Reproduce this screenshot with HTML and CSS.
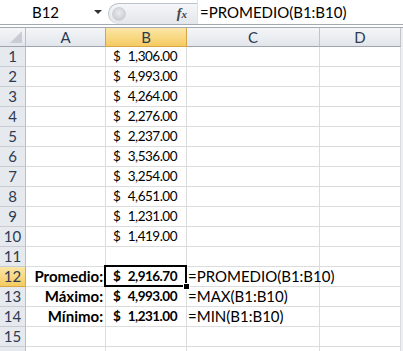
FILE: index.html
```html
<!DOCTYPE html>
<html lang="es">
<head>
  <meta charset="UTF-8">
  <title>Promedio, máximo y mínimo</title>
  <link rel="stylesheet" href="styles.css">
</head>
<body>
  <!-- Formula bar -->
  <div class="toolbar">
    <div class="namebox">
      <span class="name">B12</span>
      <span class="arrow"></span>
    </div>
    <div class="fxbtn">
      <span class="dimple"></span>
      <span class="fx">f<span class="fx-x">x</span></span>
    </div>
    <div class="formula">=PROMEDIO(B1:B10)</div>
  </div>

  <!-- Sheet -->
  <div class="sheet">
    <div class="corner">
      <svg width="12" height="12" viewBox="0 0 12 12"><polygon points="12,0 12,12 0,12" fill="#c9cdd3"/></svg>
    </div>
    <div class="ch">A</div>
    <div class="ch sel">B</div>
    <div class="ch">C</div>
    <div class="ch">D</div>
    <div class="fill"></div>

    <div class="rh">1</div><div class="c"></div><div class="c acc"><span>$</span><span>1,306.00</span></div><div class="c"></div><div class="c"></div><div class="fill"></div>
    <div class="rh">2</div><div class="c"></div><div class="c acc"><span>$</span><span>4,993.00</span></div><div class="c"></div><div class="c"></div><div class="fill"></div>
    <div class="rh">3</div><div class="c"></div><div class="c acc"><span>$</span><span>4,264.00</span></div><div class="c"></div><div class="c"></div><div class="fill"></div>
    <div class="rh">4</div><div class="c"></div><div class="c acc"><span>$</span><span>2,276.00</span></div><div class="c"></div><div class="c"></div><div class="fill"></div>
    <div class="rh">5</div><div class="c"></div><div class="c acc"><span>$</span><span>2,237.00</span></div><div class="c"></div><div class="c"></div><div class="fill"></div>
    <div class="rh">6</div><div class="c"></div><div class="c acc"><span>$</span><span>3,536.00</span></div><div class="c"></div><div class="c"></div><div class="fill"></div>
    <div class="rh">7</div><div class="c"></div><div class="c acc"><span>$</span><span>3,254.00</span></div><div class="c"></div><div class="c"></div><div class="fill"></div>
    <div class="rh">8</div><div class="c"></div><div class="c acc"><span>$</span><span>4,651.00</span></div><div class="c"></div><div class="c"></div><div class="fill"></div>
    <div class="rh">9</div><div class="c"></div><div class="c acc"><span>$</span><span>1,231.00</span></div><div class="c"></div><div class="c"></div><div class="fill"></div>
    <div class="rh">10</div><div class="c"></div><div class="c acc"><span>$</span><span>1,419.00</span></div><div class="c"></div><div class="c"></div><div class="fill"></div>
    <div class="rh">11</div><div class="c"></div><div class="c"></div><div class="c"></div><div class="c"></div><div class="fill"></div>

    <div class="rh sel">12</div>
    <div class="c label">Promedio:</div>
    <div class="c acc bold active"><span>$</span><span>2,916.70</span></div>
    <div class="c text">=PROMEDIO(B1:B10)</div>
    <div class="c"></div><div class="fill"></div>

    <div class="rh">13</div>
    <div class="c label">Máximo:</div>
    <div class="c acc bold"><span>$</span><span>4,993.00</span></div>
    <div class="c text">=MAX(B1:B10)</div>
    <div class="c"></div><div class="fill"></div>

    <div class="rh">14</div>
    <div class="c label">Mínimo:</div>
    <div class="c acc bold"><span>$</span><span>1,231.00</span></div>
    <div class="c text">=MIN(B1:B10)</div>
    <div class="c"></div><div class="fill"></div>

    <div class="rh">15</div><div class="c"></div><div class="c"></div><div class="c"></div><div class="c"></div><div class="fill"></div>
    <div class="rh"></div><div class="c"></div><div class="c"></div><div class="c"></div><div class="c"></div><div class="fill"></div>
  </div>
</body>
</html>
```

FILE: styles.css
```css
body {
  margin: 0;
  width: 403px;
  height: 351px;
  overflow: hidden;
  background: #fff;
  font-family: Lato, "Open Sans", sans-serif;
  font-size: 15px;
  color: #000;
}

/* Formula bar */
.toolbar {
  display: flex;
  height: 24px;
  border-bottom: 1px solid #a3aab3;
}

.namebox {
  width: 108px;
  display: flex;
  align-items: center;
}

.name {
  width: 91px;
  text-align: center;
}

.arrow {
  width: 0;
  height: 0;
  margin-left: 3px;
  border-left: 4px solid transparent;
  border-right: 4px solid transparent;
  border-top: 4px solid #333;
}

.fxbtn {
  width: 89px;
  margin-top: 3px;
  display: flex;
  align-items: center;
  justify-content: space-between;
  padding: 0 10px 0 3px;
  box-sizing: border-box;
  background: linear-gradient(#f5f6f8, #e3e6ea);
  border: 1px solid #bcc2ca;
  border-right: none;
  border-bottom: none;
  border-radius: 11px 0 0 11px;
}

.dimple {
  width: 12px;
  height: 12px;
  border-radius: 50%;
  background: radial-gradient(circle at 50% 40%, #e9ebee, #bfc4cb);
  border: 1px solid #cfd3d8;
}

.fx {
  font-family: "Liberation Serif", serif;
  font-style: italic;
  font-weight: bold;
  font-size: 14px;
  color: #444;
}

.fx-x {
  font-size: 11px;
}

.formula {
  flex: 1;
  padding-left: 2px;
  line-height: 24px;
  border-left: 1px solid #dfe2e6;
}

/* Sheet grid */
.sheet {
  margin-top: 2px;
  border-top: 1px solid #a3aab3;
  display: grid;
  grid-template-columns: 26px 80px 81px 133px 81px 2px;
  grid-template-rows: 19px repeat(16, 20px);
}

.sheet > div {
  box-sizing: border-box;
}

.corner {
  background: linear-gradient(#f4f6f8, #e2e6eb);
  border-right: 1px solid #b9bec6;
  border-bottom: 1px solid #9ea5ae;
  display: flex;
  align-items: flex-end;
  justify-content: flex-end;
  padding: 0 3px 3px 0;
}

.ch, .rh {
  background: linear-gradient(#f4f6f8, #e2e6eb);
  color: #2c3b52;
  text-align: center;
}

.ch {
  line-height: 18px;
  border-right: 1px solid #c0c5cc;
  border-bottom: 1px solid #9ea5ae;
}

.rh {
  line-height: 19px;
  background: #e6e9ee;
  border-right: 1px solid #b9bec6;
  border-bottom: 1px solid #c8ccd2;
}

.ch.sel, .rh.sel {
  background: linear-gradient(#fbe6a6, #f5cb62);
  border-color: #d9a646;
}

.ch.sel {
  box-shadow: -1px 0 0 #d9a646;
}

.fill {
  background: #eceef1;
}

.c {
  border-right: 1px solid #dadcdd;
  border-bottom: 1px solid #dadcdd;
  line-height: 19px;
  white-space: nowrap;
}

.acc {
  display: flex;
  justify-content: space-between;
  padding: 0 9px 0 7px;
  font-size: 13.5px;
  letter-spacing: -0.5px;
}

.bold, .label {
  font-weight: bold;
}

.label {
  text-align: right;
  padding-right: 2px;
}

.text {
  padding-left: 1px;
}

/* Active cell */
.active {
  position: relative;
}

.active::after {
  content: "";
  position: absolute;
  left: -2px;
  top: -2px;
  right: -1px;
  bottom: -1px;
  border: 2px solid #000;
}

.active::before {
  content: "";
  position: absolute;
  right: -4px;
  bottom: -4px;
  width: 5px;
  height: 5px;
  background: #000;
  border: 1px solid #fff;
  z-index: 1;
}
```
